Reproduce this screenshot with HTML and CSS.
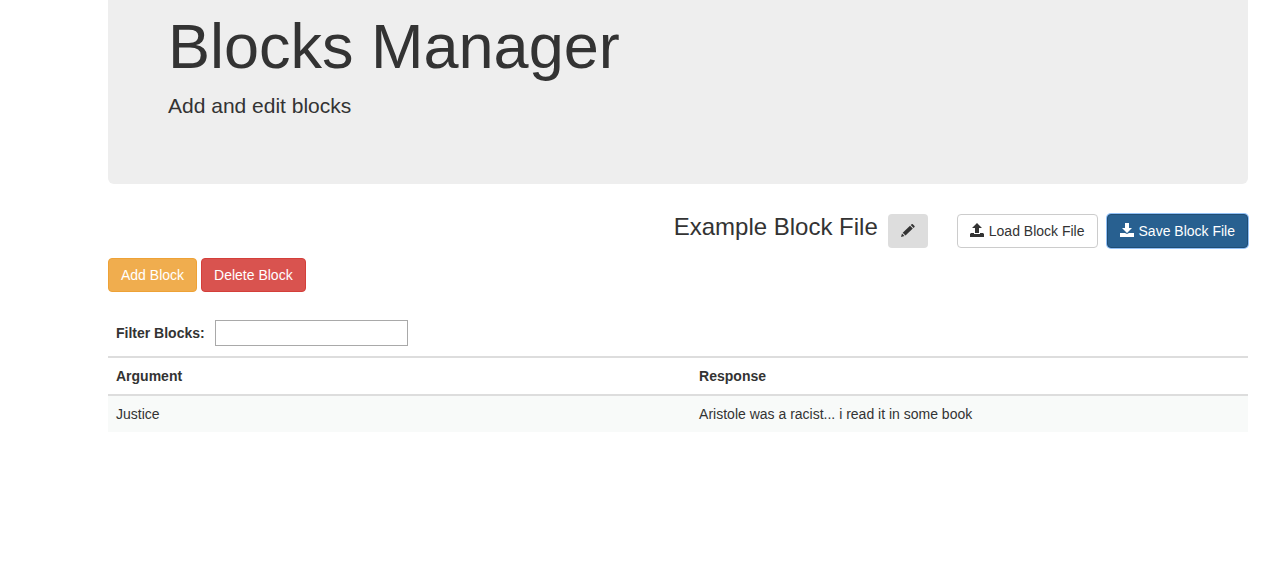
FILE: index.html
```html
<!DOCTYPE html>
<html lang="en">
<head>
<meta charset="utf-8">
<title>Blocks Manager</title>
<link rel="stylesheet" href="styles.css">
</head>
<body>
<main class="page">
  <header class="hero">
    <h1 class="hero-title">Blocks Manager</h1>
    <p class="hero-lead">Add and edit blocks</p>
  </header>
  <section class="file-bar">
    <h2 class="file-name">Example Block File</h2>
    <button class="btn btn-edit" type="button" aria-label="Rename file">
      <svg class="icon" viewBox="0 0 14 14" aria-hidden="true"><path d="M0 13l1-3.500 2.500 2.500zM1.700 8.800L9 1.800l2.800 2.800-7.300 7zM9.700 1.100l.9-.9q.6-.4 1.200 0l1.700 1.700q.5.600 0 1.200l-.9.900z"/></svg>
    </button>
    <div class="file-actions">
      <button class="btn btn-default" type="button">
        <svg class="icon" viewBox="0 0 14 14" aria-hidden="true"><path d="M7-1l5 5H9v5H5V4H2zM1 9h3v1h6V9h3l1 1H0zM0 10h14v3H0z"/></svg>
        Load Block File
      </button>
      <button class="btn btn-primary" type="button">
        <svg class="icon" viewBox="0 0 14 14" aria-hidden="true"><path d="M5-1h4v5h3L7 9 2 4h3zM0 9h5l2 1 2-1h5v4H0z"/></svg>
        Save Block File
      </button>
    </div>
  </section>
  <div class="block-actions">
    <button class="btn btn-warning" type="button">Add Block</button>
    <button class="btn btn-danger" type="button">Delete Block</button>
  </div>
  <div class="filter">
    <label class="filter-label" for="filter">Filter Blocks:</label>
    <input class="filter-input" id="filter" type="text">
  </div>
  <table class="blocks">
    <thead>
      <tr><th class="col-argument">Argument</th><th>Response</th></tr>
    </thead>
    <tbody>
      <tr><td>Justice</td><td>Aristole was a racist... i read it in some book</td></tr>
    </tbody>
  </table>
</main>
</body>
</html>
```
FILE: styles.css
```css
* {
  box-sizing: border-box;
}

body {
  margin: 0;
  background: #fff;
  color: #333;
  font: 14px/20px "Liberation Sans", Arial, sans-serif;
}

.page {
  padding: 0 38px 0 108px;
}

.hero {
  padding: 12px 60px 63px;
  border-radius: 0 0 6px 6px;
  background: #eee;
}

.hero-title {
  margin: 0 0 10px;
  font-size: 63px;
  font-weight: 400;
  line-height: 69px;
}

.hero-lead {
  margin: 0;
  font-size: 21px;
  line-height: 30px;
}

.file-bar {
  display: flex;
  justify-content: flex-end;
  align-items: flex-start;
  margin-top: 30px;
}

.file-name {
  margin: 0 10px 0 0;
  font-size: 24px;
  font-weight: 400;
  line-height: 26px;
}

.file-actions {
  display: flex;
  gap: 9px;
  margin-left: 29px;
}

.btn {
  display: flex;
  align-items: center;
  gap: 5px;
  padding: 6px 12px;
  border: 1px solid transparent;
  border-radius: 4px;
  color: #fff;
  font: inherit;
  white-space: nowrap;
  cursor: pointer;
}

.icon {
  width: 14px;
  height: 14px;
  overflow: visible;
  fill: currentColor;
}

.btn-edit {
  height: 34px;
  background: #ddd;
  color: #333;
}

.btn-default {
  border-color: #ccc;
  background: #fff;
  color: #333;
}

.btn-primary {
  border-color: #204d74;
  background: #286090;
  box-shadow: 0 0 0 1px #92c1f7;
}

.btn-warning {
  border-color: #eea236;
  background: #f0ad4e;
}

.btn-danger {
  border-color: #d43f3a;
  background: #d9534f;
}

.block-actions {
  display: flex;
  gap: 4px;
  margin-top: 10px;
}

.filter {
  display: flex;
  align-items: center;
  gap: 10px;
  margin-top: 20px;
  padding: 8px 8px 10px;
}

.filter-label {
  font-weight: 700;
}

.filter-input {
  width: 193px;
  height: 26px;
  padding: 2px;
  border: 1px solid #a9a9a9;
  background: #fff;
  color: inherit;
  font: inherit;
}

.blocks {
  width: 100%;
  border-collapse: separate;
  border-spacing: 0;
  table-layout: fixed;
}

.blocks th,
.blocks td {
  padding: 8px;
  text-align: left;
}

.blocks th {
  border-top: 2px solid #ddd;
  border-bottom: 2px solid #ddd;
}

.blocks td {
  background: #f8faf9;
}

.col-argument {
  width: 51.15%;
}
```
